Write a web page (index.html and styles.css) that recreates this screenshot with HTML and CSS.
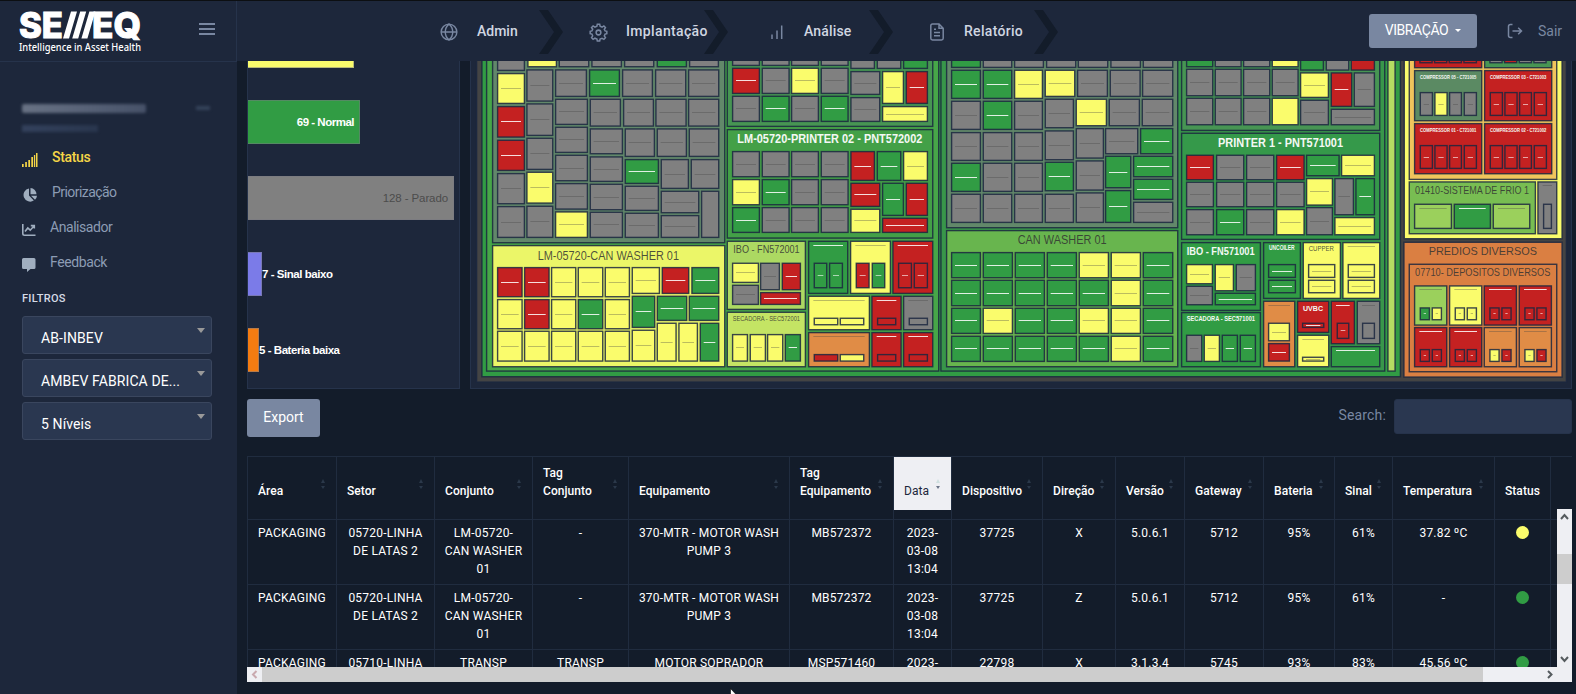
FILE: index.html
```html
<!DOCTYPE html>
<html lang="pt-BR">
<head>
<meta charset="utf-8">
<title>SEMEQ - Status</title>
<link rel="stylesheet" href="styles.css">
</head>
<body>
<div class="app">
  <aside class="sidebar">
    <div class="brand">
      <svg class="logo" width="126" height="46" viewBox="0 0 126 46" role="img" aria-label="SEMEQ">
        <g fill="#fff" stroke="#fff" stroke-width="1" class="logo-text">
          <text x="1" y="28" textLength="44" lengthAdjust="spacingAndGlyphs">SE</text>
          <text x="74" y="28" textLength="49" lengthAdjust="spacingAndGlyphs">EQ</text>
        </g>
        <path fill="#fff" d="M45 28.500l8-27h6l-8 27zM54.200 28.500l8-27h6l-8 27zM63.400 28.500l8-27h6l-8 27z"/>
        <text x="1" y="41" fill="#fff" class="logo-sub" textLength="122" lengthAdjust="spacingAndGlyphs">Intelligence in Asset Health</text>
      </svg>
      <svg class="burger" width="16" height="12" viewBox="0 0 16 12" stroke="#7987a1" stroke-width="1.900"><path d="M0 1h16M0 6h16M0 11h16"/></svg>
    </div>
    <div class="user">
      <div class="user-name"><i></i><b></b></div>
      <div class="user-role"></div>
    </div>
    <nav class="menu">
      <a class="active"><svg width="16" height="14" viewBox="0 0 16 14" fill="currentColor"><path d="M0 11h1.700v3H0zM3.200 9h1.700v5H3.200zM6.300 7H8v7H6.300zM9.300 4H11v10H9.300zM11.900 2h1.300v12h-1.300zM14 0h1.500v14H14z"/></svg><span class="m1">Status</span></a>
      <a><svg width="16" height="14" viewBox="0 0 16 14" fill="currentColor"><path d="M7 .500v7l4.800 5A6.600 6.600 0 1 1 7 .500z"/><path d="M8.500 0A6.400 6.400 0 0 1 14.500 6.300h-6z"/><path d="M9 7.800h6a6 6 0 0 1-2 4z"/></svg><span class="m2">Priorização</span></a>
      <a><svg width="14" height="14" viewBox="0 0 14 14" fill="none" stroke="currentColor" stroke-width="1.600"><path d="M.800 1v9.500q0 1.700 1.700 1.700H13.500M3 8.500l2.800-3.500 2.400 2.200 3.600-4M8.800 2.600h3.500v3"/></svg><span class="m3">Analisador</span></a>
      <a><svg width="14" height="14" viewBox="0 0 14 14" fill="currentColor"><path d="M1.500 0h10.500a1.500 1.500 0 0 1 1.500 1.500v8a1.500 1.500 0 0 1-1.500 1.500H8.500L5 14v-3H1.500A1.500 1.500 0 0 1 0 9.500v-8A1.500 1.500 0 0 1 1.500 0z"/></svg><span class="m4">Feedback</span></a>
    </nav>
    <div class="filters">
      <h6>FILTROS</h6>
      <div class="select"><span>AB-INBEV</span></div>
      <div class="select"><span>AMBEV FABRICA DE...</span></div>
      <div class="select"><span>5 Níveis</span></div>
    </div>
  </aside>

  <div class="main">
    <header class="topbar">
      <div class="steps">
        <div class="step"><svg class="ic" width="18" height="18" viewBox="0 0 24 24"><circle cx="12" cy="12" r="10.500"/><path d="M1.500 12h21M12 1.500c-3.800 3-5 6.500-5 10.500s1.200 7.500 5 10.500c3.800-3 5-6.500 5-10.500s-1.200-7.500-5-10.500z"/></svg><span class="n1">Admin</span></div>
        <div class="step s2"><svg class="ic" width="19" height="19" viewBox="0 0 24 24"><circle cx="12" cy="12" r="3"/><path d="M10 4l.5-2.500h3L14 4l2.500 1.200 2.300-1.500 2 2.100-1.500 2.300L20.300 10l2.200.5v3l-2.200.5-1 2.300 1.500 2.200-2 2.100-2.300-1.300L14 20.200l-.5 2.500h-3L10 20.200l-2.500-1-2.300 1.400-2-2.100 1.400-2.300-.9-2.200-2.200-.5v-3L3.700 10l1-2.200-1.500-2 2-2.100 2.300 1.500z"/></svg><span class="n2">Implantação</span></div>
        <div class="step s3"><svg class="ic" width="14" height="18" viewBox="0 0 14 18"><path d="M2 11.500V16M7 7.500V16M11.700 2.500V16"/></svg><span class="n3">Análise</span></div>
        <div class="step s4"><svg class="ic" width="16" height="18" viewBox="0 0 16 18"><path d="M10 1H3.500Q1.800 1 1.800 2.700v12.600Q1.800 17 3.500 17h9q1.700 0 1.700-1.700V5.200zM10 1v4.200h4.200M5 6.200h2M5 9.500h6M5 12.800h6"/></svg><span class="n4">Relatório</span></div>
      </div>
      <button class="btn mode">VIBRAÇÃO<i class="caret"></i></button>
      <a class="exit"><svg class="ic" width="16" height="16" viewBox="0 0 16 16"><path d="M5.500 1.500h-2Q1.500 1.500 1.500 3.500v9q0 2 2 2h2M5.500 8h9M11.200 4.700L14.500 8l-3.300 3.300"/></svg><span>Sair</span></a>
    </header>

    <section class="panels">
      <div class="card bars">
        <div class="bar yellow" style="width:106px"></div>
        <div class="bar green" style="width:112px"><span class="in">69 - Normal</span></div>
        <div class="bar gray" style="width:206px"><span class="in">128 - Parado</span></div>
        <div class="bar purple" style="width:14px"><span class="out">7 - Sinal baixo</span></div>
        <div class="bar orange" style="width:11px"><span class="out">5 - Bateria baixa</span></div>
      </div>
      <div class="card tree"><svg id="treemap" width="1100" height="327" viewBox="471 61 1100 327"></svg></div>
    </section>

    <section class="tools">
      <button class="btn export">Export</button>
      <label class="search"><span>Search:</span><input type="text"></label>
    </section>

    <section class="grid">
      <div class="row head" id="head"></div>
      <div class="viewport">
        <div class="rows" id="rows"></div>
        <div class="vbar"><svg width="15" height="15"><path d="M4 10l3.500-4L11 10"/></svg><i></i><svg width="15" height="15"><path d="M4 5l3.500 4L11 5"/></svg></div>
      </div>
      <div class="hbar"><svg class="off" width="15" height="15"><path d="M9.500 4L6 7.500 9.500 11"/></svg><i></i><svg width="15" height="15"><path d="M6 4l3.500 3.500L6 11"/></svg></div>
    </section>
  </div>
</div>
<svg class="pointer" width="10" height="14" viewBox="0 0 10 14"><path d="M.5.500v12l3-2.800 5-.700z" fill="#fff" stroke="#000" stroke-width=".6"/></svg>
<script src="app.js"></script>
</body>
</html>
```
FILE: styles.css
```css
* { box-sizing: border-box; }
body { margin: 0; width: 1576px; height: 694px; overflow: hidden; background: #131c2a; font-family: Roboto, "Noto Sans", sans-serif; font-size: 14px; color: #fff; }
.app { display: flex; height: 694px; border-top: 1px solid #0c0f12; }
.sidebar { width: 237px; flex: none; background: #1d273b; }
.brand { height: 61px; display: flex; align-items: flex-start; border-right: 1px solid #26334b; border-bottom: 1px solid #26334b; padding: 9px 0 0 18px; }
.logo { overflow: visible; }
.logo-text { font: 800 35.500px Inter, sans-serif; }
.logo-sub { font: 500 10px "Noto Sans", sans-serif; }
.burger { margin: 13px 0 0 55px; }
.user { height: 78px; padding: 42px 0 0 22px; filter: blur(1.600px); }
.user-name { display: flex; justify-content: space-between; padding-right: 27px; }
.user-name i { width: 124px; height: 9px; background: linear-gradient(90deg, #687284, #566176 55%, #465168); border-radius: 2px; }
.user-name b { width: 14px; height: 4px; background: #35435a; margin-top: 2px; }
.user-role { width: 76px; height: 7px; margin-top: 12px; background: linear-gradient(90deg, #33415c, #29364e); }
.menu { display: flex; flex-direction: column; padding-left: 22px; }
.menu a { height: 35px; display: flex; align-items: center; color: #8c9cb4; }
.menu svg { margin-top: 4px; }
.menu span { margin-left: 14px; margin-top: -1px; white-space: nowrap; }
.menu .active { color: #f5d547; font-weight: 500; }
.m1 { letter-spacing: -.35px; }
.m2 { letter-spacing: -.55px; }
.m3 { letter-spacing: -.45px; }
.m4 { letter-spacing: -.4px; }
.menu a:not(.active) svg { color: #a0aebf; }
.filters { padding: 12px 25px 0 22px; display: flex; flex-direction: column; gap: 5px; }
.filters h6 { margin: 0 0 6px; font-size: 11px; line-height: 13px; font-weight: 500; letter-spacing: .3px; color: #d5dbe6; }
.select { height: 38px; border: 1px solid #3a465e; border-radius: 3px; background: #2a3750; padding: 4px 6px 0 18px; display: flex; justify-content: space-between; line-height: 34px; letter-spacing: .1px; }
.select::after { content: ""; border: 4px solid transparent; border-top: 5px solid #999; border-bottom: 0; margin-top: 7px; height: 0; }
.main { width: 1339px; display: flex; flex-direction: column; }
.topbar { height: 60px; flex: none; background: #1d273b; display: flex; align-items: center; }
.ic { fill: none; stroke: #7987a1; stroke-width: 1.500; }
.ic[viewBox="0 0 24 24"] { stroke-width: 1.900; }
.steps { display: flex; height: 60px; margin-left: 161px; }
.step { width: 165px; height: 60px; display: flex; align-items: center; padding-left: 42px; position: relative; font-weight: 500; color: #d0d6e1; }
.step::after { content: ""; position: absolute; right: 0; top: 9px; width: 24px; height: 44px; background: #131c2a; clip-path: polygon(0 0, 7px 0, 20px 50%, 7px 100%, 0 100%, 12px 50%); clip-path: polygon(0 0, 9px 0, 24px 50%, 9px 100%, 0 100%, 15px 50%); }
.step .ic { margin-top: 2px; flex: none; }
.step span { position: absolute; left: 79px; white-space: nowrap; }
.step.s2 { padding-left: 26px; } .step.s2 span { left: 63px; z-index: 1; letter-spacing: .35px; }
.step.s3 { padding-left: 42px; } .step.s3 span { left: 76px; letter-spacing: .15px; }
.step.s4 { padding-left: 36px; } .step.s4 span { left: 71px; letter-spacing: .3px; }
.n1 { letter-spacing: 0; }
.btn { border: 0; border-radius: 3px; background: #7987a1; color: #fff; font: 400 14px Roboto, sans-serif; padding: 0; }
.mode { width: 108px; height: 34px; margin: -1px 30px 0 311px; letter-spacing: -.4px; padding-bottom: 2px; }
.caret { display: inline-block; border: 3px solid transparent; border-top-color: #fff; border-bottom: 0; margin-left: 7px; vertical-align: 3px; }
.exit { display: flex; align-items: center; gap: 15px; color: #7987a1; }
.exit span { margin-top: -1px; }
.panels { height: 328px; display: flex; gap: 10px; padding-left: 10px; flex: none; }
.card { border: 1px solid #26334b; border-top: 0; background: #1d273b; overflow: hidden; }
.bars { width: 213px; display: flex; flex-direction: column; gap: 32px; }
.bar { height: 44px; flex: none; position: relative; border: 1px solid rgba(120,120,130,.5); border-left: 0; display: flex; align-items: center; font: bold 11.500px/44px "Liberation Sans", sans-serif; white-space: nowrap; }
.bar:first-child { margin-top: -37px; }
.in { margin-left: auto; padding-right: 5px; letter-spacing: -.5px; }
.out { margin-left: 14px; letter-spacing: -.45px; }
.orange .out { margin-left: 11px; }
.yellow { background: #fafc6c; } .green { background: #319c44; } .purple { background: #7b7be8; } .orange { background: #f47c11; }
.gray { background: #808080; color: #4c4c4c; font-weight: normal; } .gray .in { letter-spacing: -.1px; }
.tree { width: 1102px; }
.tree svg { display: block; }
.tree text { font-family: "Liberation Sans", sans-serif; }
.tools { height: 67px; flex: none; padding: 10px 4px 0 10px; display: flex; justify-content: space-between; align-items: flex-start; }
.export { width: 73px; height: 38px; padding-bottom: 2px; }
.search { display: flex; gap: 8px; color: #7987a1; line-height: 35px; }
.search span { letter-spacing: .15px; margin-top: -1px; }
.search input { width: 178px; height: 35px; border: 1px solid #26334b; background: #2a3750; border-radius: 3px; }
.grid { width: 1325px; margin-left: 10px; height: 226px; flex: none; font-size: 12px; line-height: 18px; }
.row { display: grid; grid-template-columns: 89px 98px 98px 96px 161px 104px 58px 91px 73px 69px 79px 71px 58px 102px 56px 22px; }
.row > div { border-left: 1px solid #202c3f; }
.head { height: 53px; border-top: 1px solid #202c3f; font-weight: 500; }
.head > div { position: relative; padding: 7px 0 10px 10px; display: flex; flex-direction: column; justify-content: flex-end; letter-spacing: .05px; }
.head .sorted { background: #eeeff3; color: #1d273b; font-weight: 400; }
.sort::before, .sort::after { content: ""; position: absolute; right: 11px; border: 2.500px solid transparent; }
.sort::before { top: 22px; border-bottom: 4px solid #2b384a; border-top: 0; }
.sort::after { top: 29px; border-top: 3px solid #2b384a; border-bottom: 0; }
.sorted::before { border-bottom-color: #cfe0e0; }
.sorted::after { border-top-color: #6b7588; }
.viewport { height: 158px; display: flex; overflow: hidden; }
.rows { width: 1310px; height: 158px; overflow: hidden; flex: none; }
.rows .row { height: 65px; border-top: 1px solid #202c3f; }
.rows .spacer { height: 10px; border: 0; }
.rows .row > div { padding-top: 4px; text-align: center; letter-spacing: .22px; white-space: pre-line; overflow: hidden; font-weight: 400; }
.dot { display: block; width: 13px; height: 13px; border-radius: 50%; margin: 2px auto 0; }
.vbar { width: 15px; background: #eeeff3; display: flex; flex-direction: column; justify-content: space-between; }
.vbar i { height: 30px; background: #cdcdcd; margin-top: -38px; }
.vbar svg, .hbar svg { fill: none; stroke: #555b5e; stroke-width: 2; display: block; }
.hbar { height: 15px; background: #eeeff3; display: flex; }
.hbar i { width: 1221px; background: #cdcdcd; margin-right: 59px; }
.hbar .off { stroke: #c9a9af; }
.pointer { position: absolute; left: 730px; top: 688px; }
```
FILE: app.js
```js
const FILL = { k: '#808080', y: '#fafc6c', g: '#319c44', r: '#c42121', o: '#e08c46', l: '#9bd05c' };
const EDGE = '#1b2740';
const svg = document.getElementById('treemap');
const NS = 'http://www.w3.org/2000/svg';
function el(name, attrs, text) {
  const n = document.createElementNS(NS, name);
  for (const k in attrs) n.setAttribute(k, attrs[k]);
  if (text) n.textContent = text;
  svg.appendChild(n);
}
/* Every tile is given in thirds of a pixel from the left edge of its section. */
function section(ox, items) {
  const X = v => ox + v / 3, Y = v => 55 + v / 3;
  for (const it of items) {
    if (typeof it === 'string') {
      const [x0, y0, x1, y1, c, m] = it.split(' ');
      tile(X, Y, +x0, +y0, +x1, +y1, FILL[c] || c, c, m);
    } else if (it.t) {
      const [a, b, y, size, bold] = it.p;
      el('text', { x: X(a), y: Y(y) + size * .36, 'font-size': size, 'font-weight': bold ? 700 : 400,
        fill: bold ? '#f4f8f4' : 'rgba(50,50,50,.85)', textLength: (b - a) / 3, lengthAdjust: 'spacingAndGlyphs' }, it.t);
    }
  }
}
function tile(X, Y, x0, y0, x1, y1, fill, c, m) {
  el('rect', { x: X(x0) + .6, y: Y(y0) + .6, width: (x1 - x0) / 3 - 1.2, height: (y1 - y0) / 3 - 1.2, fill, stroke: EDGE, 'stroke-opacity': .85, 'stroke-width': 1.4 });
  if (m === '-') return;
  if (c.length > 1) return;
  const pad = m === 't' ? 16 : 12, cy = m === 't' ? y0 + 13 : (y0 + y1) / 2;
  const light = c === 'g' || c === 'r';
  const small = x1 - x0 < 45;
  el('rect', { x: X(x0 + pad), y: Math.round(Y(cy) - .5), width: Math.max(2, (x1 - x0 - 2 * pad) / 3), height: 1,
    fill: light ? '#fff' : '#444', opacity: light ? (small ? .6 : .85) : .35 });
}
/* Expands a row of tiles that share their top and bottom. */
const row = (y0, y1, xs, cs, m = '') => cs.split('').map((c, i) => `${xs[i][0]} ${y0} ${xs[i][1]} ${y1} ${c} ${m}`);

section(0, ['1428 -40 4701 983 #444444', '1444 -40 4203 967 #319c44',
  '1458 -40 2818 950 #47a648', '2821 -40 4156 950 #38964a', '4162 -40 4187 950 #b4dc62']);

const a1 = [81, 165], a2 = [169, 250], w3 = [[81,158],[162,239],[243,319],[323,400],[404,480]];
section(470, [
  '66 -40 766 565 #62886a', '66 570 766 937 #ebf668', { t: 'LM-05720-CAN WASHER 01', p: [203, 627, 601, 12] },
  ...row(-20, 48, [a1], 'k'), ...row(54, 147, [a1], 'y'), ...row(153, 248, [a1], 'r'), ...row(254, 348, [a1], 'r'), ...row(354, 448, [a1], 'k'), ...row(453, 549, [a1], 'k'),
  ...row(-20, 37, [[172,261],[266,358],[364,456],[462,553],[560,651],[657,747]], 'ykkkgk'),
  ...row(43, 140, [a2], 'k'), ...row(145, 243, [a2], 'k'), ...row(248, 345, [a2], 'k'), ...row(350, 446, [a2], 'y'), ...row(452, 549, [a2], 'k'),
  ...row(43, 126, [[255,351],[357,450],[456,549],[555,649],[654,748]], 'kgkkk'),
  ...row(131, 210, [[255,354]], 'k'), ...row(215, 294, [[255,354]], 'k'), ...row(299, 379, [[255,354]], 'k'), ...row(384, 464, [[255,354]], 'k'), ...row(469, 549, [[255,354]], 'y'),
  ...row(131, 215, [[359,453],[459,552],[556,650],[654,748]], 'kkkk'),
  ...row(220, 298, [[359,459]], 'k'), ...row(304, 381, [[359,459]], 'k'), ...row(386, 466, [[359,459]], 'k'), ...row(470, 549, [[359,459]], 'k'),
  ...row(220, 306, [[464,555],[560,651],[656,748]], 'kkk'),
  '464 312 567 387 g', '464 392 567 468 k', '464 473 567 549 k', '572 312 657 402 k', '662 312 748 402 k', '572 407 688 475 k', '572 480 688 549 k', '693 407 748 549 k -',
  ...row(636, 727, w3, 'rryyy'), ...row(732, 823, w3, 'yrygy'), ...row(827, 920, w3, 'yyyyy'),
  '485 636 570 717 y', '575 636 658 717 r', '664 636 748 717 g', '485 722 556 819 g', '560 722 652 798 g', '656 722 748 798 g',
  '485 824 556 920 y', '560 803 620 920 y', '625 803 684 920 y', '689 803 748 920 g'
]);

const p4 = [[36,120],[125,209],[213,297],[302,386]];
const mini = (x0, x1, y0, y1, c, kids) => [`${x0} ${y0} ${x1} ${y1} ${c} t`, ...kids];
section(720, [
  '20 -40 640 216 #479553', '20 222 640 551 #43a047', { t: 'LM-05720-PRINTER 02 - PNT572002', p: [52, 607, 252, 12, 1] },
  ...row(-20, 33, p4, 'kkkk'), ...row(38, 117, p4, 'rkyk'), ...row(122, 201, p4, 'kgkg'),
  ...row(-20, 42, [[391,465],[470,544],[549,624]], 'kkg'), '391 48 481 120 k', '391 126 481 201 k', '486 48 552 147 y', '557 48 624 147 r', '486 153 624 201 y',
  ...row(288, 367, p4, 'kkkk'), ...row(372, 451, p4, 'ygkk'), ...row(456, 534, p4, 'gkkk'),
  ...row(288, 378, [[391,465],[470,544],[549,624]], 'rgy'), '391 383 481 456 r', '391 461 481 534 y', '486 383 552 483 g', '557 383 624 483 r', '486 488 624 534 r',
  '20 557 258 765 #acd962', { t: 'IBO - FN572001', p: [40, 239, 584, 10.5] },
  '36 623 117 684 y', '36 689 117 750 k', '120 623 180 706 k', '185 623 243 706 r', '120 711 243 750 r',
  '20 770 258 937 #c4e464', { t: 'SECADORA - SEC572001', p: [38, 240, 791, 6.5] },
  ...row(837, 920, [[36,84],[89,138],[141,190],[194,243]], 'yyyg'),
  ...mini(264, 385, 557, 717, 'g', ['281 623 322 700 g', '327 623 369 700 g']),
  ...mini(390, 513, 557, 717, 'y', ['407 623 449 700 r', '455 623 496 700 g']),
  ...mini(517, 640, 557, 717, 'r', ['534 623 576 700 r', '581 623 624 700 r']),
  ...mini(264, 450, 722, 826, 'y', ['281 788 355 811 y -', '359 788 433 811 y -']),
  ...mini(454, 545, 722, 826, 'r', ['471 788 529 811 r -']), ...mini(549, 640, 722, 826, 'k', ['566 788 624 811 k -']),
  ...mini(264, 450, 831, 937, 'o', ['281 897 355 920 r -', '359 897 433 920 y -']),
  ...mini(454, 545, 831, 937, 'r', ['471 897 529 920 r -']), ...mini(549, 640, 831, 937, 'r', ['566 897 624 920 r -'])
]);

const c4 = [[48,138],[143,232],[237,324],[329,417]], c7 = [[48,138],[143,234],[239,330],[335,426],[431,522],[527,618],[623,715]];
section(935, [
  '33 -40 730 520 #62886a', '33 525 730 937 #68b54e', { t: 'CAN WASHER 01', p: [248, 515, 555, 12] },
  ...row(-20, 39, [[48,138],[143,232],[237,327],[333,424],[428,520],[526,618],[623,715]], 'gkkkkkk'),
  ...row(44, 132, c4.slice(0, 3), 'ggy'), ...row(44, 126, [[329,421],[426,519],[524,617],[621,715]], 'ykkk'),
  ...row(137, 225, c4.slice(0, 3), 'kgk'), '329 131 417 220 k', ...row(131, 214, [[422,516],[521,615],[620,715]], 'ykk'),
  ...row(231, 318, c4.slice(0, 3), 'kkk'), '329 226 417 316 k', '422 219 507 311 k', '510 219 610 298 k', '615 219 715 298 g',
  ...row(323, 411, c4.slice(0, 3), 'gkk'), '329 320 417 409 g', '422 316 507 407 k', '510 302 589 400 g', '594 302 715 367 g', '594 371 715 435 g',
  ...row(416, 504, c4, 'kkkk'), '422 412 507 504 k', '510 405 589 504 g', '594 440 715 504 k',
  ...row(591, 670, c7, 'ggggyyg'), ...row(674, 754, c7, 'gggggyg'), ...row(758, 837, c7, 'gyggyyg'), ...row(842, 921, c7, 'gggggyg')
]);

const d4 = [[48,130],[134,215],[219,301],[305,386]], e4 = [[48,132],[138,223],[228,313],[318,404]];
section(1170, [
  '33 -40 631 228 #479553', '33 233 631 555 #35994a', { t: 'PRINTER 1 - PNT571001', p: [144, 519, 262, 12, 1] },
  ...row(-20, 37, d4, 'gkky'), ...row(41, 124, d4, 'kkkk'), ...row(128, 211, d4.slice(0, 3), 'kkk'), '305 128 386 211 y -',
  ...row(-20, 47, [[390,462],[467,538],[542,615]], 'gkr'), '390 52 477 129 y', '390 134 477 211 k', '482 52 547 156 r', '551 52 615 156 k', '482 161 615 211 k',
  ...row(299, 376, e4, 'rkkr'), ...row(380, 457, e4, 'kkkk'), ...row(462, 541, e4, 'kgky'),
  '408 299 509 364 g', '513 299 615 364 y', '408 369 489 452 y', '408 456 489 541 k', '493 369 552 481 k', '556 369 615 481 g', '493 486 615 541 y',
  '33 561 273 768 #319c44', { t: 'IBO - FN571001', p: [50, 254, 587, 11, 1] },
  '48 627 129 688 y', '48 692 129 751 k', '134 627 192 709 y', '197 627 258 709 k', '134 713 258 751 g',
  '33 771 273 937 #319c44', { t: 'SECADORA - SEC571001', p: [50, 255, 791, 7, 1] },
  ...row(839, 921, [[48,97],[101,150],[155,204],[209,258]], 'kygg'),
  '279 561 393 732 #319c44', { t: 'UNCOILER', p: [297, 374, 579, 6.5, 1] }, '294 627 378 669 g', '294 674 378 715 g',
  '398 561 513 732 #fafc6c', { t: 'CUPPER', p: [416, 492, 581, 7] }, '414 627 496 669 y', '414 674 496 715 y',
  ...mini(517, 631, 561, 732, 'y', ['533 627 615 669 y', '533 674 615 715 y']),
  ...mini(279, 376, 737, 937, 'o', ['294 803 360 859 y', '294 864 360 920 r']),
  '381 737 478 834 #c42121', { t: 'UVBC', p: [399, 459, 761, 7.5, 1] }, '396 803 463 819 r',
  ...mini(381, 478, 839, 937, 'y', ['396 905 463 920 y']),
  ...mini(482, 555, 737, 868, 'r', ['500 803 538 852 r']), ...mini(560, 631, 737, 868, 'k', ['576 803 615 852 k -']),
  '482 873 631 937 g t'
]);

const comp = (x, y, c, t, cs) => [`${x} ${y} ${x + 205} ${y + 154} ${c}`, { t, p: [x + 18, x + 187, y + 20, 5.3, 1] },
  ...row(y + 66, y + 138, [[x+17,x+57],[x+61,x+101],[x+105,x+144],[x+149,x+189]], cs)];
const depot = (x, y, c, k) => [`${x} ${y} ${x + 100} ${y + 121} ${c} t`, ...row(y + 66, y + 105, [[x+17,x+48],[x+53,x+84]], k)];
section(1380, [
  '71 -40 548 553 #fafc6c', '86 -40 532 375 #f0c45c',
  '102 -60 307 40 #c42121', '312 -60 517 40 #479553',
  ...row(-40, 25, [[118,158],[162,202],[206,246],[250,291]], 'rrrr'), ...row(-40, 25, [[328,368],[372,412],[416,456],[460,500]], 'krkk'),
  ...comp(102, 45, '#5b8a63', 'COMPRESSOR 05 - C721005', 'kykk'), ...comp(312, 45, '#c42121', 'COMPRESSOR 03 - C721003', 'rrrr'),
  ...comp(102, 204, '#c42121', 'COMPRESSOR 01 - C721001', 'rrrr'), ...comp(312, 204, '#c42121', 'COMPRESSOR 02 - C721002', 'rrrr'),
  '86 379 468 538 #78bd52', { t: '01410-SISTEMA DE FRIO 1', p: [105, 447, 407, 10] },
  '102 446 216 522 l t', '221 446 333 522 g t', '338 446 451 522 l t',
  '472 379 532 538 k t', '489 446 516 522 k -',
  '70 560 548 968 #da7f42', { t: 'PREDIOS DIVERSOS', p: [146, 471, 588, 11.5] },
  '86 626 532 952 #da7f42', { t: '07710- DEPOSITOS DIVERSOS', p: [105, 511, 653, 10] },
  ...depot(102, 691, 'l', 'gy'), ...depot(207, 691, 'y', 'yy'), ...depot(311, 691, 'r', 'rr'), ...depot(416, 691, 'r', 'rr'),
  ...depot(102, 816, 'r', 'rr'), ...depot(207, 816, 'r', 'rr'), ...depot(311, 816, 'o', 'yr'), ...depot(416, 816, 'o', 'yr')
]);

const heads = ['Área', 'Setor', 'Conjunto', 'Tag\nConjunto', 'Equipamento', 'Tag\nEquipamento', 'Data', 'Dispositivo', 'Direção', 'Versão', 'Gateway', 'Bateria', 'Sinal', 'Temperatura', 'Status', ''];
document.getElementById('head').innerHTML = heads.map((h, i) =>
  `<div class="${i < 14 ? 'sort' : ''} ${h === 'Data' ? 'sorted' : ''}">${h.split('\n').map(s => `<span>${s}</span>`).join('')}</div>`).join('');
const data = [
  ['PACKAGING', '05720-LINHA\nDE LATAS 2', 'LM-05720-\nCAN WASHER\n01', '-', '370-MTR - MOTOR WASH\nPUMP 3', 'MB572372', '2023-\n03-08\n13:04', '37725', 'X', '5.0.6.1', '5712', '95%', '61%', '37.82 ºC', 'y', ''],
  ['PACKAGING', '05720-LINHA\nDE LATAS 2', 'LM-05720-\nCAN WASHER\n01', '-', '370-MTR - MOTOR WASH\nPUMP 3', 'MB572372', '2023-\n03-08\n13:04', '37725', 'Z', '5.0.6.1', '5712', '95%', '61%', '-', 'g', ''],
  ['PACKAGING', '05710-LINHA', 'TRANSP', 'TRANSP', 'MOTOR SOPRADOR', 'MSP571460', '2023-', '22798', 'X', '3.1.3.4', '5745', '93%', '83%', '45.56 ºC', 'g', '']
];
document.getElementById('rows').innerHTML = '<div class="row spacer">' + '<div></div>'.repeat(16) + '</div>' + data.map(r =>
  '<div class="row">' + r.map((v, i) => `<div>${i === 14 ? `<i class="dot" style="background:${FILL[v]}"></i>` : v}</div>`).join('') + '</div>').join('');
```
